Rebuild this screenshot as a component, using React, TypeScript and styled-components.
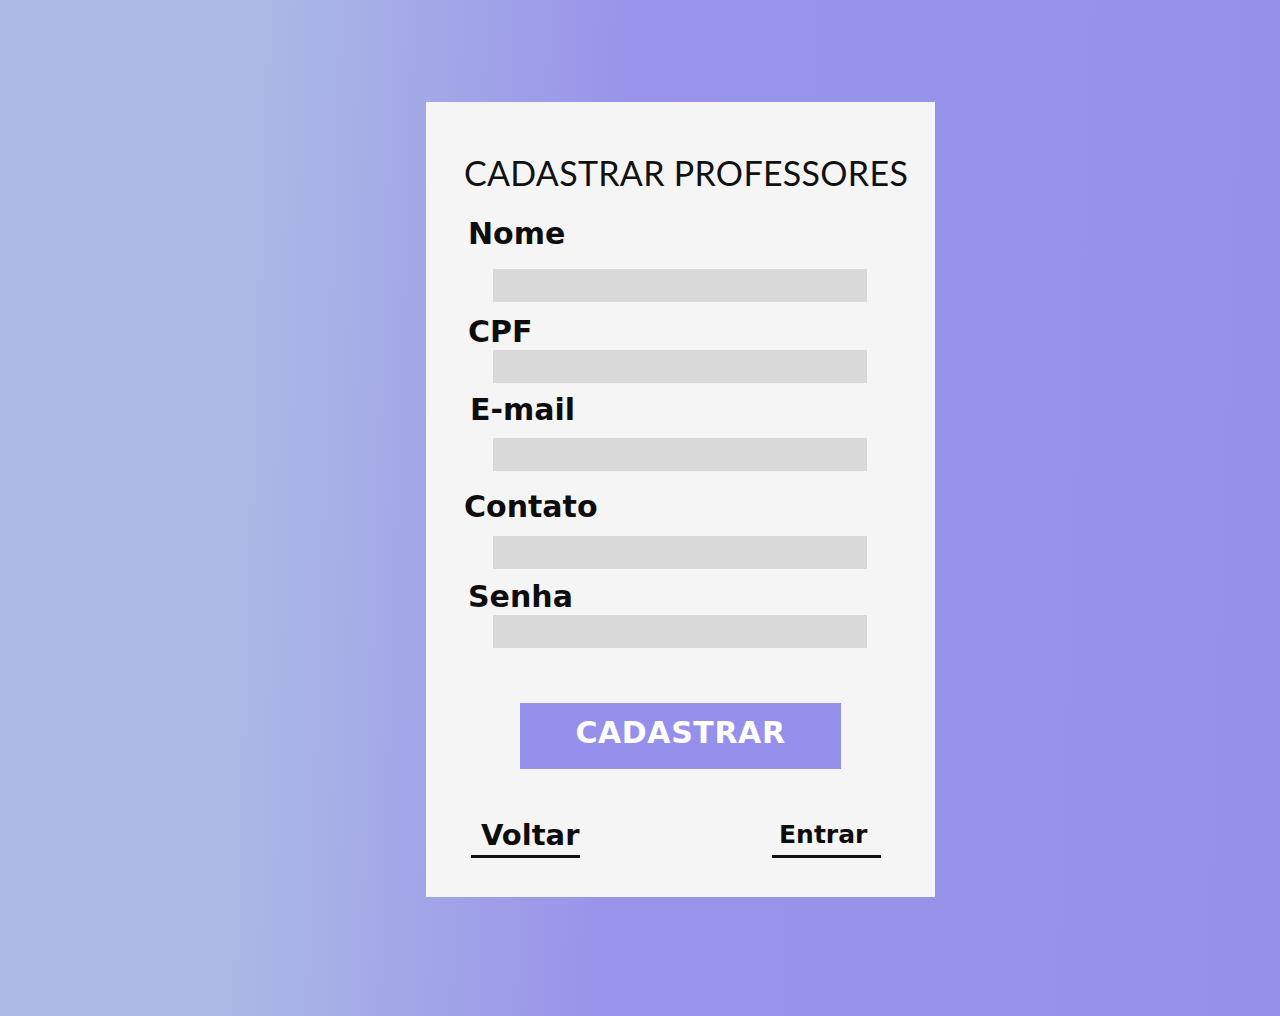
import React from "react";
import styled, { createGlobalStyle } from "styled-components";

const GlobalStyle = createGlobalStyle`
  html, body { margin: 0; padding: 0; }
  body { font-family: "DejaVu Sans", sans-serif; }
  * { box-sizing: border-box; }
`;

const Page = styled.div`
  width: 100%;
  min-height: 1016px;
  display: flex;
  justify-content: flex-start;
  align-items: flex-start;
  padding: 102px 0 0 426px;
  background: linear-gradient(92deg, #abb9e5 0%, #abb9e5 20%, #9994ea 48%, #9591ea 100%);
`;

const Card = styled.form`
  width: 509px;
  height: 795px;
  background: #f6f5f5;
  display: flex;
  flex-direction: column;
  padding-top: 51px;
`;

const Title = styled.h1`
  margin: 0;
  padding-left: 38px;
  font-family: Lato, "DejaVu Sans", sans-serif;
  font-weight: 400;
  font-size: 34px;
  line-height: 40px;
  letter-spacing: 0.3px;
  color: #111;
  white-space: nowrap;
`;

const Field = styled.div<{ $top: number }>`
  display: flex;
  flex-direction: column;
  margin-top: ${(p) => p.$top}px;
`;

const Label = styled.label<{ $indent: number; $gap: number }>`
  display: block;
  padding-left: ${(p) => p.$indent}px;
  margin-bottom: ${(p) => p.$gap}px;
  font-family: "DejaVu Sans", sans-serif;
  font-weight: 700;
  font-size: 30px;
  line-height: 30px;
  color: #0d0d0d;
`;

const Input = styled.div`
  width: 374px;
  height: 33px;
  margin-left: 67px;
  background: #d9d9d9;
`;

const SubmitButton = styled.button`
  align-self: center;
  width: 321px;
  margin-top: 55px;
  padding: 0 0 7px;
  border: none;
  background: #9590eb;
  color: #ffffff;
  font-family: "DejaVu Sans", sans-serif;
  font-weight: 700;
  font-size: 30px;
  line-height: 59px;
  letter-spacing: 0.6px;
  text-align: center;
`;

const LinksRow = styled.div`
  display: flex;
  justify-content: space-between;
  align-items: flex-end;
  margin-top: 51px;
  padding: 0 54px 0 45px;
`;

const NavLink = styled.a<{ $size: number; $indent: number }>`
  display: block;
  width: 109px;
  padding-left: ${(p) => p.$indent}px;
  padding-bottom: 5px;
  border-bottom: 3px solid #111;
  font-family: "DejaVu Sans", sans-serif;
  font-weight: 700;
  font-size: ${(p) => p.$size}px;
  line-height: 30px;
  color: #0d0d0d;
  text-decoration: none;
  cursor: pointer;
`;

const fields = [
  { label: "Nome", top: 26, indent: 42, gap: 20 },
  { label: "CPF", top: 15, indent: 42, gap: 3 },
  { label: "E-mail", top: 12, indent: 44, gap: 13 },
  { label: "Contato", top: 21, indent: 38, gap: 14 },
  { label: "Senha", top: 13, indent: 42, gap: 3 },
];

export default function App() {
  return (
    <>
      <GlobalStyle />
      <Page>
        <Card onSubmit={(e) => e.preventDefault()}>
          <Title>CADASTRAR PROFESSORES</Title>
          {fields.map((f) => (
            <Field key={f.label} $top={f.top}>
              <Label $indent={f.indent} $gap={f.gap}>
                {f.label}
              </Label>
              <Input />
            </Field>
          ))}
          <SubmitButton type="submit">CADASTRAR</SubmitButton>
          <LinksRow>
            <NavLink $size={29} $indent={10}>
              Voltar
            </NavLink>
            <NavLink $size={25} $indent={7}>
              Entrar
            </NavLink>
          </LinksRow>
        </Card>
      </Page>
    </>
  );
}
